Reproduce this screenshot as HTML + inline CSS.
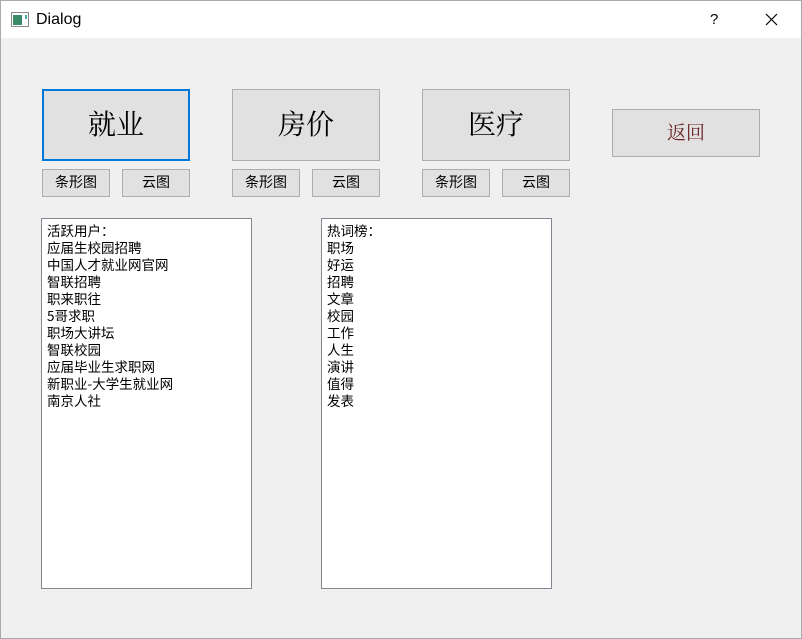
<!DOCTYPE html>
<html><head><meta charset="utf-8"><style>
body{margin:0;width:802px;height:639px;background:#f0f0f0;position:relative;overflow:hidden;font-family:"Liberation Sans","Noto Sans CJK SC",sans-serif;}
.frame{position:absolute;left:0;top:0;width:800px;height:637px;border:1px solid #aaa;}
.title{position:absolute;left:1px;top:1px;width:800px;height:37px;background:#fff;}
.b{position:absolute;box-sizing:border-box;background:#e1e1e1;border:1px solid #adadad;text-align:center;color:#000;}
.big{font-family:"Noto Serif CJK SC",serif;font-size:28px;}
.sm{font-size:14px;line-height:25px;}
.list{position:absolute;box-sizing:border-box;background:#fff;border:1px solid #828790;font-family:"WenQuanYi Zen Hei","Noto Sans CJK SC",sans-serif;font-size:13.5px;line-height:17px;padding:3px 0 0 5px;white-space:pre;}
</style></head><body>
<div class="frame"></div>
<div class="title">
<svg style="position:absolute;left:10px;top:11px" width="18" height="15"><rect x="0.5" y="0.5" width="17" height="14" fill="#fff" stroke="#888"/><rect x="2" y="3" width="9" height="10" fill="#3a8a6a"/><rect x="14" y="3" width="2" height="4" fill="#4aa"/></svg>
<div style="position:absolute;left:35px;top:10px;font-size:16px;">Dialog</div>
<div style="position:absolute;left:709px;top:10px;font-size:15px;">?</div>
<svg style="position:absolute;left:764px;top:12px" width="13" height="13"><path d="M1 1L12 12M12 1L1 12" stroke="#000" stroke-width="1.2"/></svg>
</div>
<div class="b big" style="left:42px;top:89px;width:148px;height:72px;border:2px solid #0078d7;line-height:64px;">就业</div>
<div class="b big" style="left:232px;top:89px;width:148px;height:72px;line-height:66px;">房价</div>
<div class="b big" style="left:422px;top:89px;width:148px;height:72px;line-height:66px;">医疗</div>
<div class="b" style="left:612px;top:109px;width:148px;height:48px;line-height:44px;font-family:'Noto Serif CJK SC',serif;font-size:19px;color:#6b2222;">返回</div>
<div class="b sm" style="left:42px;top:169px;width:68px;height:28px;">条形图</div>
<div class="b sm" style="left:122px;top:169px;width:68px;height:28px;">云图</div>
<div class="b sm" style="left:232px;top:169px;width:68px;height:28px;">条形图</div>
<div class="b sm" style="left:312px;top:169px;width:68px;height:28px;">云图</div>
<div class="b sm" style="left:422px;top:169px;width:68px;height:28px;">条形图</div>
<div class="b sm" style="left:502px;top:169px;width:68px;height:28px;">云图</div>
<div class="list" style="left:41px;top:218px;width:211px;height:371px;">活跃用户：
应届生校园招聘
中国人才就业网官网
智联招聘
职来职往
5哥求职
职场大讲坛
智联校园
应届毕业生求职网
新职业-大学生就业网
南京人社</div>
<div class="list" style="left:321px;top:218px;width:231px;height:371px;">热词榜：
职场
好运
招聘
文章
校园
工作
人生
演讲
值得
发表</div>
</body></html>
